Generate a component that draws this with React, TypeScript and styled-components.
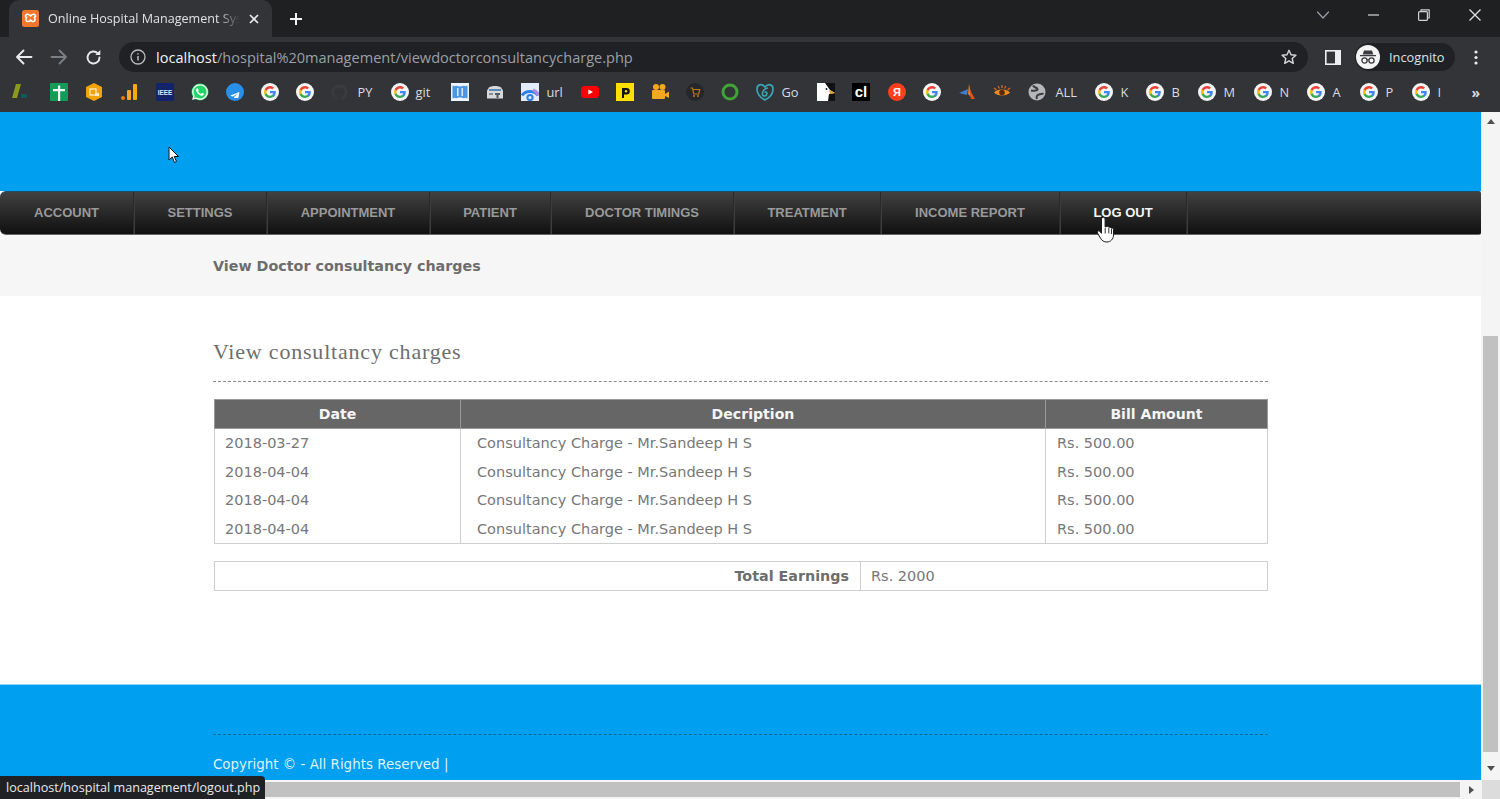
import React from "react";
import styled, { createGlobalStyle } from "styled-components";
import { FaWhatsapp, FaTelegramPlane, FaGithub } from "react-icons/fa";

const Global = createGlobalStyle`
  html, body { margin: 0; padding: 0; height: 100%; overflow: hidden; background: #fff; }
  * { box-sizing: border-box; }
  #root { height: 799px; }
`;

const Shell = styled.div`
  position: relative; width: 1500px; height: 799px; display: flex; flex-direction: column; overflow: hidden;
`;
/* ---- browser chrome ---- */
const TabStrip = styled.div`
  height: 37px; background: #1f2022; display: flex; align-items: flex-end; padding-left: 9px;
`;
const Tab = styled.div`
  width: 263px; height: 37px; background: #323437; border-radius: 10px 10px 0 0;
  display: flex; align-items: center; padding: 0 11px 0 13px; color: #dfe1e4;
  font: 12.6px "Open Sans", sans-serif;
`;
const TabTitle = styled.span`
  margin-left: 9px; width: 192px; white-space: nowrap;
  -webkit-mask-image: linear-gradient(90deg, #000 88%, transparent 100%);
`;
const NewTab = styled.div`
  width: 20px; height: 20px; margin: 0 0 8px 14px; display: flex; align-items: center; justify-content: center;
`;
const WindowButtons = styled.div`
  margin-left: auto; height: 37px; display: flex; align-items: center; padding-bottom: 7px;
`;
const WindowButton = styled.div`
  width: 50.5px; display: flex; justify-content: center;
`;
const Toolbar = styled.div`
  height: 38px; background: #323437; display: flex; align-items: center; padding: 2px 0 0 15px;
`;
const NavIcon = styled.div<{ $w?: number }>`
  width: ${(p) => p.$w ?? 35}px; height: 24px; display: flex; align-items: center; justify-content: flex-start;
`;
const Omnibox = styled.div`
  width: 1189px; height: 30px; background: #202124; border-radius: 15px; display: flex; align-items: center;
  padding: 0 11px 0 11px; font: 14.55px "Open Sans", sans-serif; color: #9aa0a6;
`;
const UrlHost = styled.span` color: #f1f3f4; `;
const UrlText = styled.span` margin-left: 10px; white-space: nowrap; `;
const StarWrap = styled.div` margin-left: auto; display: flex; `;
const SidePanel = styled.div` margin-left: 17px; display: flex; `;
const IncognitoPill = styled.div`
  width: 100px; height: 28px; margin-left: 14px; border-radius: 14px; background: #202124; display: flex; align-items: center;
  padding-left: 1px; color: #dfe1e4; font: 12.8px "Open Sans", sans-serif;
`;
const IncognitoBadge = styled.div`
  width: 24px; height: 24px; border-radius: 50%; background: #f4f4f4; display: flex; align-items: center; justify-content: center; margin-right: 9px;
`;
const MenuDots = styled.div` margin-left: 19px; display: flex; `;
const BookmarksBar = styled.div`
  height: 37px; background: #323437; display: flex; align-items: center; padding: 0 20px 3px 1px;
`;
const Bookmark = styled.div<{ $w: number }>`
  width: ${(p) => p.$w}px; flex: none; display: flex; align-items: center; padding-left: 9.5px; height: 24px;
`;
const BookmarkLabel = styled.span<{ $gap?: number }>`
  margin-left: ${(p) => p.$gap ?? 8}px; color: #dadce0; font: 12.8px "Open Sans", sans-serif;
`;
const Chevrons = styled.span`
  margin-left: auto; color: #dadce0; font: bold 14px "Open Sans", sans-serif;
`;
/* ---- viewport ---- */
const Viewport = styled.div` height: 668px; display: flex; `;
const Page = styled.div` width: 1481px; display: flex; flex-direction: column; `;
const Hero = styled.div` height: 79px; background: #009ff0; flex: none; `;
const Nav = styled.nav`
  height: 44px; flex: none; display: flex; border-radius: 6px 2px 2px 6px; border-top: 1px solid #1b4f6c; border-bottom: 1px solid #666;
  background: linear-gradient(#414141, #101010);
`;
const NavItem = styled.a<{ $w: number; $active?: boolean }>`
  width: ${(p) => p.$w}px; display: flex; align-items: center; justify-content: center;
  font: bold 13px "Liberation Sans", Arial, sans-serif; padding: 0 0 2px 0;
  color: ${(p) => (p.$active ? "#f4f4f4" : "#9a9a9a")};
  border-right: 1px solid #2a2a2a; box-shadow: 1px 0 0 #3d3d3d;
`;
const SubBar = styled.div`
  height: 61px; flex: none; background: #f6f6f6; display: flex; align-items: center; padding: 1px 0 0 213px;
  font: bold 14.3px "DejaVu Sans", Verdana, sans-serif; color: #6d6d6d;
`;
const Content = styled.main` height: 388px; flex: none; background: #fff; `;
const Inner = styled.div` width: 1055px; margin: 0 auto; `;
const Title = styled.h2`
  margin: 0; padding: 42px 0 14px; height: 86px; border-bottom: 1px dashed #8a8a8a;
  font: 400 22px/28px "Liberation Serif", Georgia, serif; letter-spacing: .8px; color: #6e6e6e;
`;
const Table = styled.table`
  width: 1053px; margin: 17px 0 0 1px; border-collapse: collapse; table-layout: fixed; border: 1px solid #cfcfcf;
  font: 14.5px "DejaVu Sans", Verdana, sans-serif; color: #777;
`;
const Th = styled.th`
  height: 29px; padding: 0; background: #666; color: #f5f5f5; font-size: 14.1px; border: 1px solid #999;
`;
const Td = styled.td<{ $pad?: number }>`
  height: 28.75px; padding: 0 0 0 ${(p) => p.$pad ?? 10}px; border-left: 1px solid #cfcfcf; border-right: 1px solid #cfcfcf;
`;
const TotalTable = styled(Table)` margin-top: 17px; `;
const TotalLabel = styled.td`
  height: 29px; text-align: right; padding-right: 11px; font-weight: bold; font-size: 14.3px; border-right: 1px solid #cfcfcf; color: #6d6d6d;
`;
const TotalValue = styled.td` padding-left: 10px; `;
const Footer = styled.footer`
  height: 96px; flex: none; background: #009ff0; border-top: 1px solid #8fd6f8; padding-top: 49px;
`;
const FooterInner = styled(Inner)`
  border-top: 1px dashed #0c6a9b; padding-top: 20px; color: #dff3ff; white-space: nowrap;
  font: 13.43px/20px "DejaVu Sans", Verdana, sans-serif;
`;
/* ---- scrollbars ---- */
const VScroll = styled.div`
  width: 19px; background: #f4f4f4; display: flex; flex-direction: column; align-items: center;
`;
const ScrollSpacer = styled.div<{ $h: number }>` height: ${(p) => p.$h}px; flex: none; `;
const VThumb = styled.div` width: 14.5px; height: 416px; flex: none; background: #c1c1c1; `;
const VArrow = styled.div`
  width: 0; height: 0; margin-top: 14px; border-left: 4px solid transparent; border-right: 4px solid transparent; border-top: 5px solid #505050;
`;
const UpArrow = styled(VArrow)`
  margin-top: 7px; border-top: 0; border-bottom: 5px solid #505050;
`;
const HScroll = styled.div`
  height: 19px; background: #f4f4f4; display: flex; align-items: center;
`;
const HThumb = styled.div` width: 1460px; height: 15px; background: #c1c1c1; `;
const HArrow = styled.div`
  margin-left: 9px; width: 0; height: 0; border-top: 4px solid transparent; border-bottom: 4px solid transparent; border-left: 5px solid #505050;
`;
const Corner = styled.div` margin-left: auto; width: 18px; height: 19px; background: #dcdcdc; `;
const StatusBubble = styled.div`
  position: absolute; left: 0; bottom: 0; width: 265px; height: 23px; background: #202124; border-radius: 0 4px 0 0;
  color: #e8eaed; font: 12.6px/23px "Open Sans", sans-serif; padding-left: 6px; white-space: nowrap;
`;
const CursorMark = styled.div<{ $x: number; $y: number }>`
  position: absolute; left: ${(p) => p.$x}px; top: ${(p) => p.$y}px; display: flex;
`;

/* ---- icons ---- */
const G = () => (
  <svg width="18" height="18" viewBox="0 0 24 24">
    <circle cx="12" cy="12" r="12" fill="#f4f4f4" />
    <g transform="translate(4 4) scale(.667)">
      <path fill="#4285F4" d="M23.5 12.3c0-.8-.1-1.6-.2-2.3H12v4.500h6.500c-.3 1.500-1.100 2.800-2.400 3.600v3h3.900c2.200-2.100 3.500-5.100 3.500-8.800z" />
      <path fill="#34A853" d="M12 24c3.200 0 6-1.100 8-2.900l-3.900-3c-1.100.7-2.500 1.200-4.100 1.200-3.100 0-5.800-2.100-6.700-5H1.300v3.100C3.300 21.300 7.300 24 12 24z" />
      <path fill="#FBBC05" d="M5.300 14.300c-.5-1.500-.5-3.100 0-4.600V6.600h-4a12 12 0 0 0 0 10.800l4-3.100z" />
      <path fill="#EA4335" d="M12 4.800c1.800 0 3.300.6 4.600 1.800l3.400-3.400C17.900 1.200 15.200 0 12 0 7.300 0 3.300 2.700 1.300 6.600l4 3.100c.9-2.900 3.600-4.900 6.700-4.900z" />
    </g>
  </svg>
);
const Ic = ({ children }: { children: React.ReactNode }) => (
  <svg width="18" height="18" viewBox="0 0 18 18">{children}</svg>
);
const icons: Record<string, React.ReactNode> = {
  g: <G />,
  zoho: <Ic><path d="M5 1h5L6 15H1z" fill="#8a9a1e" /><rect x="10" y="11" width="6" height="4" fill="#0e5a5f" /></Ic>,
  cross: <Ic><rect width="18" height="18" rx="1" fill="#0f9d58" /><path d="M8 2.500h2.200V6H15v2.200h-4.800V18H8V8.200H3V6h5z" fill="#f4f4f4" /></Ic>,
  hex: <Ic><path d="M9 0l8 4v10l-8 4-8-4V4z" fill="#f2a20c" /><rect x="5" y="6" width="6" height="6" fill="none" stroke="#ffedbf" strokeWidth="1.300" /><rect x="10" y="10" width="4" height="3" fill="#ffedbf" /></Ic>,
  bars: <Ic><rect x="1" y="13" width="4" height="4" rx="2" fill="#f57c00" /><rect x="7" y="7" width="4" height="10" rx="1" fill="#f9a825" /><rect x="13" y="1" width="4" height="16" rx="1" fill="#f9ab00" /></Ic>,
  ieee: <Ic><rect width="18" height="18" fill="#14246b" /><text x="9" y="12" textAnchor="middle" fontSize="6.400" fontWeight="700" fontFamily="Liberation Sans" fill="#dfe6ff">IEEE</text></Ic>,
  whatsapp: <Ic><circle cx="9" cy="9" r="8.500" fill="#25d366" /><foreignObject x="0" y="0" width="18" height="18"><FaWhatsapp size={18} color="#fff" /></foreignObject></Ic>,
  telegram: <Ic><circle cx="9" cy="9" r="9" fill="#2a8fe6" /><foreignObject x="3.500" y="4" width="11" height="11"><FaTelegramPlane size={10} color="#fff" /></foreignObject></Ic>,
  github: <FaGithub size={17} color="#3a3b3e" />,
  notch: <Ic><rect width="18" height="18" fill="#eef4fb" /><path d="M1.500 2.500c2 1 3 1 3.500 0 2 1.200 6 1.200 8 0 .5 1 1.500 1 3.500 0v13c-2-1-3-1-3.500 0-2-1.200-6-1.200-8 0-.5-1-1.500-1-3.500 0z" fill="#4a96e0" /><rect x="6" y="5" width="1.500" height="8" fill="#dbe9f8" /><rect x="10.500" y="5" width="1.500" height="8" fill="#dbe9f8" /></Ic>,
  car: <Ic><path d="M3 4.500c2-2 10-2 12 0l2 3v8H1v-8z" fill="#d5d8dc" /><rect x="3" y="6" width="12" height="2" fill="#5d87b5" /><path d="M9 10h5v2h-1.500v3h-2v-3H9z" fill="#55585c" /><rect x="3" y="10" width="4" height="2" fill="#8a8d91" /></Ic>,
  wifi: <Ic><path d="M0 0h18v18H0z" fill="#e4ebf8" /><path d="M1 12.500a9.500 8.500 0 0 1 16 0" fill="none" stroke="#2f7fe8" strokeWidth="3" /><path d="M12 7a9 8 0 0 1 5.500 5.500" fill="none" stroke="#a88be0" strokeWidth="3" /><circle cx="9" cy="14.500" r="2.600" fill="none" stroke="#2f7fe8" strokeWidth="2" /></Ic>,
  youtube: <Ic><rect y="3" width="18" height="12" rx="3.500" fill="#f00" /><path d="M7.300 6.400L12 9l-4.700 2.600z" fill="#fff" /></Ic>,
  pbox: <Ic><rect width="18" height="18" fill="#ffe000" /><path d="M6 15V5h4.500a3 3 0 0 1 0 6.600H8V15z" fill="#111" /><circle cx="10" cy="8.300" r="1.200" fill="#ffe000" /></Ic>,
  camera: <Ic><circle cx="5" cy="4" r="3" fill="#f5a623" /><circle cx="11.500" cy="4" r="3" fill="#f5a623" /><rect x="1" y="7" width="13" height="9" rx="1" fill="#f5a623" /><path d="M14 11l4-2.500V15l-4-2z" fill="#f5a623" /></Ic>,
  cart: <Ic><circle cx="9" cy="9" r="9" fill="#26272a" /><path d="M4.500 5h2l1.200 6h5l1-4.500H6.800" fill="none" stroke="#b9791c" strokeWidth="1.200" /><circle cx="8" cy="13" r="1" fill="#b9791c" /><circle cx="12" cy="13" r="1" fill="#b9791c" /></Ic>,
  ring: <Ic><circle cx="9" cy="9" r="7" fill="none" stroke="#3fa535" strokeWidth="3" /></Ic>,
  godaddy: <Ic><path d="M9 4C6 .5 1 1 1 6c0 5 4 9 8 11 4-2 8-6 8-11 0-5-5-5.500-8-2z" fill="none" stroke="#3aa5b5" strokeWidth="1.700" /><path d="M12 5c-3 0-6 3-5.500 6.500C7 14 11 13 11 10.500 11 9 9.500 8.500 8.500 9.500" fill="none" stroke="#3aa5b5" strokeWidth="1.600" /></Ic>,
  gull: <Ic><rect width="18" height="18" fill="#111" /><path d="M0 0h8l5 7 5 3-6 1-1 7H0z" fill="#fff" /><path d="M12 7l6 3-5 1z" fill="#e89a22" /><circle cx="9.500" cy="6" r=".9" fill="#111" /></Ic>,
  cl: <Ic><rect width="18" height="18" fill="#000" /><text x="9" y="14" textAnchor="middle" fontSize="15" fontWeight="700" fontFamily="Liberation Sans" fill="#fff">cl</text></Ic>,
  ya: <Ic><circle cx="9" cy="9" r="9" fill="#fc3f1d" /><text x="9" y="13" textAnchor="middle" fontSize="11" fontWeight="700" fontFamily="Liberation Sans" fill="#fff">Я</text></Ic>,
  plane: <Ic><path d="M11 1l3 14-4-4z" fill="#e8842c" /><path d="M1 10l9-4-1 6z" fill="#3d7fd0" /><path d="M11 5l6 11-4 0z" fill="#d9541e" /></Ic>,
  eye: <Ic><path d="M1 9.500c3-4 13-4 16 0-3 4-13 4-16 0z" fill="#f08a1d" /><circle cx="9" cy="9.500" r="2.800" fill="#5a2a08" /><path d="M1 5l2.500 2M5 3l1.500 2.500M9 2v3M13 3l-1.500 2.500M17 5l-2.500 2" stroke="#e0661a" strokeWidth="1.300" /></Ic>,
  globe: <Ic><circle cx="9" cy="9" r="8.500" fill="#b4b6b9" /><path d="M5 2.500c1 2 4 2 4.500 3.500S6 8 3 7.500M9 16c-1-2 0-4 2-4.500s3.500-1 4.500-.5" fill="none" stroke="#3b3c3f" strokeWidth="2" /></Ic>,
};
const bookmarks: [string, string | null, number, number?][] = [
  ["zoho", null, 39], ["cross", null, 35], ["hex", null, 35], ["bars", null, 36], ["ieee", null, 35], ["whatsapp", null, 35], ["telegram", null, 35],
  ["g", null, 35], ["g", null, 35], ["github", "PY", 60, 10], ["g", "git", 60, 7], ["notch", null, 35], ["car", null, 35], ["wifi", "url", 60],
  ["youtube", null, 35], ["pbox", null, 35], ["camera", null, 35], ["cart", null, 35], ["ring", null, 35], ["godaddy", "Go", 61], ["gull", null, 35],
  ["cl", null, 36], ["ya", null, 35], ["g", null, 35], ["plane", null, 35], ["eye", null, 35], ["globe", "ALL", 67, 10], ["g", "K", 51], ["g", "B", 52],
  ["g", "M", 56], ["g", "N", 53], ["g", "A", 53], ["g", "P", 52], ["g", "I", 45],
];
const navItems: [string, number][] = [["ACCOUNT", 134], ["SETTINGS", 133], ["APPOINTMENT", 163], ["PATIENT", 121], ["DOCTOR TIMINGS", 183], ["TREATMENT", 147], ["INCOME REPORT", 179], ["LOG OUT", 127]];
const rows = ["2018-03-27", "2018-04-04", "2018-04-04", "2018-04-04"];
const stroke = { fill: "none", strokeLinecap: "round", strokeLinejoin: "round" } as const;

export default function App() {
  return (
    <Shell>
      <Global />
      <TabStrip>
        <Tab>
          <svg width="17" height="17" viewBox="0 0 17 17"><rect width="17" height="17" rx="2.500" fill="#f4772e" /><path d="M4.500 4.500c2-1 3 .5 4 1.500 1-1 2-2.500 4-1.500s1 3-.5 2.500c1 1 1.500 3 .5 4s-3 .5-4-1c-1 1.500-3 2-4 1s-.5-3 .5-4C3.500 7.500 2.500 5.500 4.500 4.500z" fill="none" stroke="#fff" strokeWidth="1.500" /></svg>
          <TabTitle>Online Hospital Management Sys</TabTitle>
          <svg width="10" height="10" viewBox="0 0 10 10" style={{ marginLeft: 9 }}><path d="M1 1l8 8M9 1l-8 8" stroke="#e8eaed" strokeWidth="1.700" /></svg>
        </Tab>
        <NewTab><svg width="14" height="14" viewBox="0 0 14 14"><path d="M7 1v12M1 7h12" stroke="#f1f3f4" strokeWidth="2" /></svg></NewTab>
        <WindowButtons>
          <WindowButton><svg width="12" height="8" viewBox="0 0 12 8"><path d="M.5 1L6 7l5.500-6" {...stroke} stroke="#9aa0a6" strokeWidth="1.200" /></svg></WindowButton>
          <WindowButton><svg width="11" height="2" viewBox="0 0 11 2"><path d="M0 1h11" stroke="#c8cacc" strokeWidth="1.300" /></svg></WindowButton>
          <WindowButton><svg width="12" height="12" viewBox="0 0 12 12"><rect x=".6" y="2.600" width="8.800" height="8.800" rx="1" {...stroke} stroke="#d0d2d4" strokeWidth="1.200" /><path d="M3 2.500V.8h8.200V9H9.500" {...stroke} stroke="#d0d2d4" strokeWidth="1.200" /></svg></WindowButton>
          <WindowButton><svg width="12" height="12" viewBox="0 0 12 12"><path d="M.5.5l11 11M11.500.5l-11 11" stroke="#e0e2e4" strokeWidth="1.300" /></svg></WindowButton>
        </WindowButtons>
      </TabStrip>
      <Toolbar>
        <NavIcon><svg width="18" height="16" viewBox="0 0 18 16"><path d="M16.500 8H2M8.500 1.500L2 8l6.500 6.500" {...stroke} stroke="#e8eaed" strokeWidth="1.900" /></svg></NavIcon>
        <NavIcon><svg width="18" height="16" viewBox="0 0 18 16"><path d="M1.500 8H16M9.500 1.500L16 8l-6.500 6.500" {...stroke} stroke="#7b7e82" strokeWidth="1.900" /></svg></NavIcon>
        <NavIcon $w={34}><svg width="17" height="17" viewBox="0 0 17 17"><path d="M14.500 8.500a6 6 0 1 1-1.700-4.200" {...stroke} stroke="#e8eaed" strokeWidth="1.900" /><path d="M15.300 1v5h-5z" fill="#e8eaed" /></svg></NavIcon>
        <Omnibox>
          <svg width="16" height="16" viewBox="0 0 16 16"><circle cx="8" cy="8" r="7" {...stroke} stroke="#b9bcc0" strokeWidth="1.300" /><path d="M8 7v4.500M8 4.300v1.200" stroke="#b9bcc0" strokeWidth="1.500" /></svg>
          <UrlText><UrlHost>localhost</UrlHost>/hospital%20management/viewdoctorconsultancycharge.php</UrlText>
          <StarWrap><svg width="16" height="16" viewBox="0 0 16 16"><path d="M8 1.300l2 4.500 4.900.5-3.700 3.200 1.100 4.800L8 11.800l-4.300 2.500 1.100-4.800L1.100 6.300 6 5.800z" {...stroke} stroke="#d5d7da" strokeWidth="1.400" /></svg></StarWrap>
        </Omnibox>
        <SidePanel><svg width="16" height="15" viewBox="0 0 16 15"><rect x=".8" y=".8" width="14.400" height="13.400" fill="none" stroke="#eceef0" strokeWidth="1.600" /><rect x="10" y="1" width="5" height="13" fill="#eceef0" /></svg></SidePanel>
        <IncognitoPill>
          <IncognitoBadge>
            <svg width="18" height="16" viewBox="0 0 18 16"><path d="M5 1.500h8l1.300 4H3.700zM1 6h16v1.200H1z" fill="#3a3b3e" /><circle cx="5.500" cy="11.500" r="2.600" fill="none" stroke="#3a3b3e" strokeWidth="1.300" /><circle cx="12.500" cy="11.500" r="2.600" fill="none" stroke="#3a3b3e" strokeWidth="1.300" /><path d="M8 11h2" stroke="#3a3b3e" strokeWidth="1.200" /></svg>
          </IncognitoBadge>
          Incognito
        </IncognitoPill>
        <MenuDots><svg width="4" height="15" viewBox="0 0 4 15"><circle cx="2" cy="2" r="1.600" fill="#e8eaed" /><circle cx="2" cy="7.500" r="1.600" fill="#e8eaed" /><circle cx="2" cy="13" r="1.600" fill="#e8eaed" /></svg></MenuDots>
      </Toolbar>
      <BookmarksBar>
        {bookmarks.map(([ic, label, w, gap], i) => (
          <Bookmark key={i} $w={w}>{icons[ic]}{label && <BookmarkLabel $gap={gap}>{label}</BookmarkLabel>}</Bookmark>
        ))}
        <Chevrons>»</Chevrons>
      </BookmarksBar>
      <Viewport>
        <Page>
          <Hero />
          <Nav>
            {navItems.map(([t, w]) => <NavItem key={t} $w={w} $active={t === "LOG OUT"}>{t}</NavItem>)}
          </Nav>
          <SubBar>View Doctor consultancy charges</SubBar>
          <Content>
            <Inner>
              <Title>View consultancy charges</Title>
              <Table>
                <colgroup><col width="246" /><col width="585" /><col width="222" /></colgroup>
                <thead><tr><Th>Date</Th><Th>Decription</Th><Th>Bill Amount</Th></tr></thead>
                <tbody>
                  {rows.map((d, i) => (
                    <tr key={i}><Td>{d}</Td><Td $pad={16}>Consultancy Charge - Mr.Sandeep H S</Td><Td $pad={11}>Rs. 500.00</Td></tr>
                  ))}
                </tbody>
              </Table>
              <TotalTable>
                <colgroup><col width="646" /><col width="407" /></colgroup>
                <tbody><tr><TotalLabel>Total Earnings</TotalLabel><TotalValue>Rs. 2000</TotalValue></tr></tbody>
              </TotalTable>
            </Inner>
          </Content>
          <Footer><FooterInner>Copyright © - All Rights Reserved |</FooterInner></Footer>
        </Page>
        <VScroll>
          <UpArrow />
          <ScrollSpacer $h={212} />
          <VThumb />
          <VArrow />
        </VScroll>
      </Viewport>
      <HScroll><HThumb /><HArrow /><Corner /></HScroll>
      <StatusBubble>localhost/hospital management/logout.php</StatusBubble>
      <CursorMark $x={168} $y={146}>
        <svg width="12" height="18" viewBox="0 0 12 18"><path d="M1 1v13l3.200-3 2.300 5.500 2-1-2.300-5H10.500z" fill="#fff" stroke="#111" strokeWidth="1" /></svg>
      </CursorMark>
      <CursorMark $x={1096} $y={216}>
        <svg width="21" height="27" viewBox="0 0 21 27"><path d="M5.500 3a1.800 1.800 0 0 1 3.600 0v8l2-.5c1-.2 1.700.3 1.900.9 1-.5 2 0 2.200.8 1-.4 2.300.2 2.300 1.300V19c0 3.800-2.800 7-6.500 7-3.200 0-5-1.200-6.500-3.800L1.500 17c-.8-1.400.9-2.900 2.200-1.700l1.800 2z" fill="#fff" stroke="#1a1a1a" strokeWidth="1" /><path d="M9.200 12v5.500M12.800 12v5.500M15.500 13v5" stroke="#1a1a1a" strokeWidth=".9" /></svg>
      </CursorMark>
    </Shell>
  );
}
